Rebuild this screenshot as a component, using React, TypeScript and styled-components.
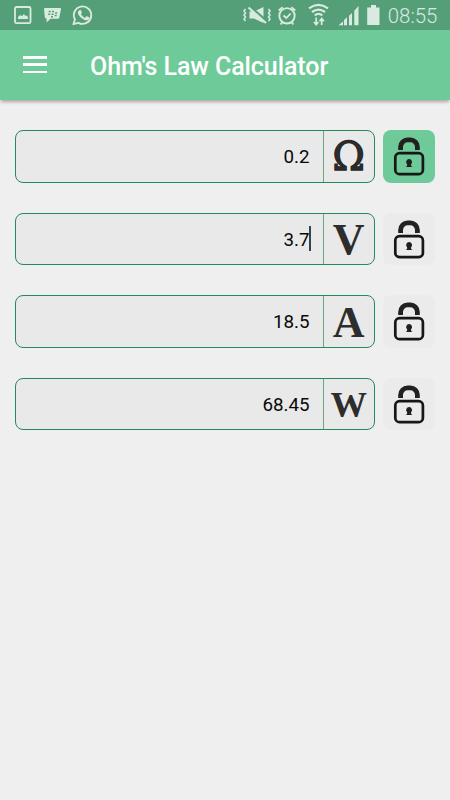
import React from "react";
import styled, { createGlobalStyle } from "styled-components";

const GlobalStyle = createGlobalStyle`
  * { box-sizing: border-box; }
  body { margin: 0; background: #efefef; font-family: Roboto, sans-serif; }
`;

const Screen = styled.div`
  width: 450px;
  height: 800px;
  display: flex;
  flex-direction: column;
  overflow: hidden;
  background: #efefef;
`;

const StatusBar = styled.div`
  height: 30px;
  flex: none;
  background: #559f78;
  svg { display: block; }
`;

const AppBar = styled.header`
  height: 70px;
  flex: none;
  display: flex;
  align-items: center;
  padding: 2px 0 0 23px;
  gap: 43px;
  background: #6ecb99;
  box-shadow: 0 3px 3px -1px rgba(50, 20, 35, 0.33);
`;

const MenuButton = styled.button`
  width: 24px;
  height: 17px;
  display: flex;
  flex-direction: column;
  justify-content: space-between;
  padding: 0;
  border: 0;
  background: none;
  margin-top: -3px;
`;

const MenuLine = styled.span`
  height: 2.5px;
  width: 100%;
  background: #fff;
`;

const Title = styled.h1`
  margin: 2px 0 0;
  color: #fff;
  font-size: 25px;
  line-height: 30px;
  font-weight: 500;
  letter-spacing: -0.08px;
  white-space: nowrap;
`;

const Fields = styled.main`
  display: flex;
  flex-direction: column;
  gap: 30px;
  padding: 30px 15px;
`;

const Row = styled.div`
  display: flex;
  gap: 7.5px;
  height: 52.5px;
`;

const Field = styled.div`
  width: 360px;
  display: flex;
  border: 1.5px solid #25895a;
  border-radius: 8px;
  background: #e9e9e9;
`;

const Value = styled.div`
  flex: 1;
  display: flex;
  align-items: center;
  justify-content: flex-end;
  padding: 2px 13px 0 0;
  font-size: 18.75px;
  color: #080808;
`;

const Caret = styled.span`
  width: 2px;
  height: 25px;
  margin: -2px -1px 0 -1px;
  background: #34444c;
`;

const Unit = styled.div<{ $size: number; $light: boolean; $drop: number }>`
  width: 51.5px;
  display: flex;
  align-items: center;
  justify-content: center;
  border-left: 1px solid #6aa787;
  font-family: ${(p) => (p.$light ? '"DejaVu Serif"' : '"Liberation Serif"')}, serif;
  font-size: ${(p) => p.$size}px;
  font-weight: ${(p) => (p.$light ? 400 : 700)};
  -webkit-text-stroke: ${(p) => (p.$light ? "1.3px #262626" : "0")};
  line-height: 40px;
  color: #2d2d2d;
  padding-top: ${(p) => p.$drop}px;
`;

const LockButton = styled.button<{ $active: boolean }>`
  width: 52.5px;
  height: 52.5px;
  padding: 0;
  border: 0;
  border-radius: 8px;
  background: ${(p) => (p.$active ? "#6ecb99" : "#ebebeb")};
  svg { display: block; }
`;

const StatusIcons = () => (
  <svg width="450" height="30" viewBox="0 0 450 30" fill="none" stroke="#d9eae0">
    <rect x="15" y="7" width="15.5" height="16.2" rx="1.5" strokeWidth="1.8" />
    <path d="M18 19v-2l2.2-2 1.7 1.2 2-2.2 1.6 2 1.4-.6 1 1.6v2z" fill="#d9eae0" stroke="none" />
    <path d="M45.2 8H60q1.2 0 1 1.2l-1.7 8.3q-.3 1.3-1.5 1.3h-7.3L46.6 22.6V18.8Q45 18.8 44.8 17L44 9.2Q44 8 45.2 8Z" fill="#d9eae0" stroke="none" />
    <path d="M48.7 11.6h2M52 11.6h2M48.2 14.2h2M51.5 14.2h2M55.2 12.9h2M51 16.8h2M54.7 15.5h2" stroke="#559f78" strokeWidth="1.5" />
    <path d="M73.4 24.2 75 19.5A8.7 8.7 0 1 1 78.4 22.8Z" strokeWidth="1.9" strokeLinejoin="round" />
    <path d="M79.3 10.2q1.1-.9 1.6.1l1 2.1q-.1.8-1 1.7 1.3 2.5 4 3.8l1.4-1.6q.7-.3 2.7.9.9.5.3 1.6-1.5 2.6-5.3.9-4.2-1.6-6-5.6-.9-2.5 1.3-3.9Z" fill="#d9eae0" stroke="none" />
    <path d="M249.5 11.5h4.5L263.5 7v16L254 18.5h-4.5Z" fill="#d9eae0" stroke="none" />
    <path d="M249 6 265 20" stroke="#559f78" strokeWidth="3" />
    <path d="M248.5 7.5 266 23" strokeWidth="2" />
    <path d="m245.5 9-1.5 2 1.5 2-1.5 2 1.5 2-1.5 2 1.5 2M268.5 9l1.5 2-1.5 2 1.5 2-1.5 2 1.5 2-1.5 2" strokeWidth="1.5" />
    <circle cx="287" cy="15.8" r="7.7" strokeWidth="1.9" />
    <path d="m283.5 15.5 2.8 2.5 4.3-4.5" strokeWidth="1.8" />
    <path d="m278.7 10.5 4-3.3M295.3 10.5l-4-3.3M282 22.5l-1.3 2M292 22.5l1.3 2" strokeWidth="1.9" />
    <path d="M309 8.3q9.5-6.8 19 0M312 12q6.5-4.8 13 0M314.7 15.3q3.8-2.8 7.6 0" strokeWidth="2.2" />
    <path d="M316.2 17.5v7m-2.2-2.5 2.2 2.7 2.2-2.7M321.7 25v-6m-2.2 2.2 2.2-2.7 2.2 2.7" strokeWidth="1.7" />
    <g fill="#d9eae0" stroke="none">
      <path d="M338.5 25.3 343 21.5v3.8ZM344 25.3v-5.2l3-2.8v8ZM349 25.3v-9.6l3-2.8v12.4ZM354.3 25.3v-14.5L358.5 6v19.3Z" />
      <path d="M371 5h5v2.5h3.5V25H367.2V7.5H371Z" />
      <text x="387.8" y="23" fontFamily="Roboto, sans-serif" fontSize="20" fontWeight="300" textLength="49.5" lengthAdjust="spacingAndGlyphs">08:55</text>
    </g>
  </svg>
);

const OpenLock = () => (
  <svg width="52.5" height="52.5" viewBox="0 0 52.5 52.5" fill="none" stroke="#171717">
    <path d="M17.6 20v-3.1a7 7 0 0 1 7-7h2.8a7 7 0 0 1 7 7V20" strokeWidth="4.8" stroke="#222021" />
    <rect x="12.3" y="23.2" width="27.6" height="20.9" rx="4.2" strokeWidth="2.7" />
    <path d="M26.1 29a3 3 0 0 1 2 5.2v1.8l1.5 1.1h-7l1.5-1.1v-1.8a3 3 0 0 1 2-5.2Z" fill="#202020" stroke="none" />
  </svg>
);

const rows = [
  { value: "0.2", unit: "Ω", size: 39, light: true, drop: 2, active: true, caret: false },
  { value: "3.7", unit: "V", size: 44, light: false, drop: 2, active: false, caret: true },
  { value: "18.5", unit: "A", size: 44, light: false, drop: 4, active: false, caret: false },
  { value: "68.45", unit: "W", size: 36.5, light: false, drop: 3, active: false, caret: false },
];

export default function App() {
  return (
    <Screen>
      <GlobalStyle />
      <StatusBar><StatusIcons /></StatusBar>
      <AppBar>
        <MenuButton aria-label="Menu"><MenuLine /><MenuLine /><MenuLine /></MenuButton>
        <Title>Ohm's Law Calculator</Title>
      </AppBar>
      <Fields>
        {rows.map((r) => (
          <Row key={r.unit}>
            <Field>
              <Value>{r.value}{r.caret && <Caret />}</Value>
              <Unit $size={r.size} $light={r.light} $drop={r.drop}>{r.unit}</Unit>
            </Field>
            <LockButton $active={r.active} aria-label={`Lock ${r.unit}`}><OpenLock /></LockButton>
          </Row>
        ))}
      </Fields>
    </Screen>
  );
}
